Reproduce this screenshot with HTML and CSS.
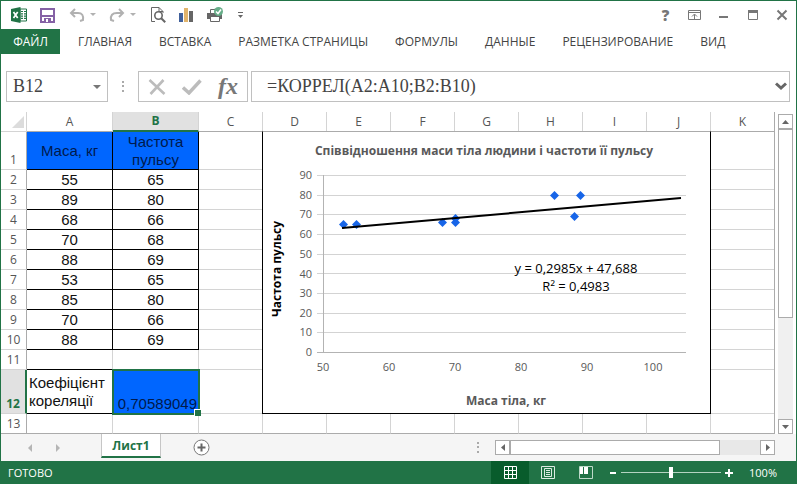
FILE: index.html
```html
<!DOCTYPE html>
<html lang="uk">
<head>
<meta charset="utf-8">
<meta name="viewport" content="width=device-width, initial-scale=1">
<title>Excel</title>
<link rel="stylesheet" href="styles.css">
</head>
<body>
<div class="app">
  <header class="titlebar">
    <div class="quick">
      <svg class="logo" width="16" height="16" viewBox="0 0 16 16" aria-hidden="true"><path d="M9 2h6.500v12H9z" fill="#fff" stroke="#217346"/><path d="M10 4.500h2m1 0h2m-5 2.300h2m1 0h2m-5 2.300h2m1 0h2m-5 2.300h2m1 0h2" stroke="#217346" stroke-width="1.200"/><path d="M0 2l9.500-2v16L0 14z" fill="#217346"/><path d="M2.500 5l4.200 6M6.700 5l-4.200 6" stroke="#fff" stroke-width="1.700"/></svg>
      <button class="tool save" aria-label="Зберегти"><svg width="15" height="15" viewBox="0 0 15 15"><path d="M1 1h13v13H1z" fill="#fff" stroke="#8561a5" stroke-width="2"/><path d="M2 7h11v2H2zM4 10h7v4H4z" fill="#8561a5"/><path d="M6 11h2v3H6z" fill="#fff"/></svg></button>
      <button class="tool history" aria-label="Скасувати"><svg width="29" height="16" viewBox="0 0 29 16"><path d="M7 2L3 6l4 4M3.500 6H10q6 0 5 7l-3 1" fill="none" stroke="#b1b1b1" stroke-width="2"/><path d="M22 6h6l-3 3z" fill="#b1b1b1"/></svg></button>
      <button class="tool history" aria-label="Повторити"><svg width="29" height="16" viewBox="0 0 29 16"><path d="M10 2l4 4-4 4M13.500 6H8Q1 6 2 13l3 1" fill="none" stroke="#b1b1b1" stroke-width="2"/><path d="M21 6h6l-3 3z" fill="#b1b1b1"/></svg></button>
      <button class="tool" aria-label="Перегляд"><svg width="16" height="16" viewBox="0 0 16 16"><path d="M5 14.500H1.500V.5H9l4 4V6M9 .5v4h4" fill="none" stroke="#666"/><circle cx="8.500" cy="8.500" r="3.700" fill="#fff" stroke="#666" stroke-width="1.600"/><path d="M11.200 11.200l4 4" stroke="#666" stroke-width="2"/></svg></button>
      <button class="tool" aria-label="Діаграма"><svg width="16" height="16" viewBox="0 0 16 16"><path d="M1 6h4v9H1z" fill="#40609b"/><path d="M6 1h4v14H6z" fill="#e2b46b"/><path d="M11 4h4v11h-4z" fill="#666"/></svg></button>
      <button class="tool print" aria-label="Друк"><svg width="18" height="16" viewBox="0 0 18 16"><path d="M4.500 6V2.500H9" fill="none" stroke="#666"/><path d="M1 6h15v6h-2v-2H4v2H1z" fill="#666"/><path d="M4.500 10v4.500h9V10" fill="#fff" stroke="#666"/><circle cx="12.500" cy="4.500" r="4.500" fill="#66ad88"/><path d="M10 4.500l2 2 3-4" fill="none" stroke="#fff" stroke-width="1.500"/></svg></button>
      <button class="tool more" aria-label="Налаштувати"><svg width="7" height="8" viewBox="0 0 7 8"><path d="M1 1.500h5" stroke="#666"/><path d="M1 4h5L3.500 7z" fill="#666"/></svg></button>
    </div>
    <div class="window">
      <button class="wbtn help" aria-label="Довідка">?</button>
      <button class="wbtn" aria-label="Стрічка"><svg width="14" height="12" viewBox="0 0 14 12"><path d="M.5 1.500h12v9H.5zM.5 3.500h12M6.500 10V5.500M4 7.500L6.500 5 9 7.500" fill="none" stroke="#777"/></svg></button>
      <button class="wbtn" aria-label="Згорнути"><svg width="12" height="12" viewBox="0 0 12 12"><path d="M1 7h9v2H1z" fill="#777"/></svg></button>
      <button class="wbtn" aria-label="Розгорнути"><svg width="12" height="12" viewBox="0 0 12 12"><path d="M1.500 2v8.500h9V2" fill="none" stroke="#777"/><path d="M1 1h10v3H1z" fill="#777"/></svg></button>
      <button class="wbtn" aria-label="Закрити"><svg width="12" height="12" viewBox="0 0 12 12"><path d="M1.500 1.500l9 9m0-9l-9 9" stroke="#777" stroke-width="2"/></svg></button>
    </div>
  </header>
  <nav class="menu">
    <button class="file">ФАЙЛ</button>
    <button>ГЛАВНАЯ</button>
    <button>ВСТАВКА</button>
    <button>РАЗМЕТКА СТРАНИЦЫ</button>
    <button>ФОРМУЛЫ</button>
    <button>ДАННЫЕ</button>
    <button>РЕЦЕНЗИРОВАНИЕ</button>
    <button>ВИД</button>
  </nav>
  <div class="formula-row">
    <div class="box namebox">
      <input type="text" value="B12" aria-label="Ім'я клітинки">
      <button aria-label="Список імен"><svg width="8" height="4" viewBox="0 0 8 4"><path d="M0 0h8L4 4z" fill="#777"/></svg></button>
    </div>
    <svg class="grip" width="2" height="11" viewBox="0 0 2 11" aria-hidden="true"><path d="M0 0h2v2H0zM0 4h2v2H0zM0 9h2v2H0z" fill="#aaa"/></svg>
    <div class="box actions">
      <button aria-label="Скасувати введення"><svg width="18" height="16" viewBox="0 0 18 16"><path d="M1.500 1l15 14M15.500 1L2.500 15" stroke="#bcbcbc" stroke-width="2.600"/></svg></button>
      <button aria-label="Ввести"><svg width="20" height="16" viewBox="0 0 20 16"><path d="M1 8.500l6 5.500L18.500 1.500" fill="none" stroke="#bcbcbc" stroke-width="3.400"/></svg></button>
      <button class="fx" aria-label="Вставити функцію">fx</button>
    </div>
    <div class="box formula">
      <input type="text" value="=КОРРЕЛ(A2:A10;B2:B10)" aria-label="Формула">
      <button aria-label="Розгорнути рядок формул"><svg width="12" height="9" viewBox="0 0 12 9"><path d="M1 1.500l5 4.500 5-4.500" fill="none" stroke="#666" stroke-width="3"/></svg></button>
    </div>
  </div>
  <main class="work">
    <div class="sheet">
      <table>
        <colgroup><col class="c-num"><col class="c-wide"><col class="c-wide"><col class="c-std"><col class="c-std"><col class="c-std"><col class="c-std"><col class="c-std"><col class="c-std"><col class="c-std"><col class="c-std"><col></colgroup>
        <thead><tr><th class="corner"><svg width="12" height="12" viewBox="0 0 12 12" aria-hidden="true"><path d="M12 0v12H0z" fill="#dcdcdc"/></svg></th><th>A</th><th class="on">B</th><th>C</th><th>D</th><th>E</th><th>F</th><th>G</th><th>H</th><th>I</th><th>J</th><th>K</th></tr></thead>
        <tbody>
          <tr class="first"><th>1</th><td class="d blue">Маса, кг</td><td class="d blue">Частота пульсу</td><td></td><td colspan="7"></td><td></td></tr>
          <tr><th>2</th><td class="d">55</td><td class="d">65</td><td></td><td colspan="7"></td><td></td></tr>
          <tr><th>3</th><td class="d">89</td><td class="d">80</td><td></td><td colspan="7"></td><td></td></tr>
          <tr><th>4</th><td class="d">68</td><td class="d">66</td><td></td><td colspan="7"></td><td></td></tr>
          <tr><th>5</th><td class="d">70</td><td class="d">68</td><td></td><td colspan="7"></td><td></td></tr>
          <tr><th>6</th><td class="d">88</td><td class="d">69</td><td></td><td colspan="7"></td><td></td></tr>
          <tr><th>7</th><td class="d">53</td><td class="d">65</td><td></td><td colspan="7"></td><td></td></tr>
          <tr><th>8</th><td class="d">85</td><td class="d">80</td><td></td><td colspan="7"></td><td></td></tr>
          <tr><th>9</th><td class="d">70</td><td class="d">66</td><td></td><td colspan="7"></td><td></td></tr>
          <tr><th>10</th><td class="d">88</td><td class="d">69</td><td></td><td colspan="7"></td><td></td></tr>
          <tr><th>11</th><td class="under"></td><td></td><td></td><td colspan="7"></td><td></td></tr>
          <tr class="result"><th class="on">12</th><td class="d label">Коефіцієнт кореляції</td><td class="d active">0,70589049</td><td></td><td colspan="7"></td><td></td></tr>
          <tr class="last"><th>13</th><td></td><td></td><td></td><td></td><td></td><td></td><td></td><td></td><td></td><td></td><td></td></tr>
        </tbody>
      </table>
      <figure class="chart">
        <svg viewBox="263 132 447 281" role="img" aria-label="Діаграма">
          <path d="M317 175.500H686M317 195.500H686M317 214.500H686M317 234.500H686M317 254.500H686M317 273.500H686M317 293.500H686M317 313.500H686M317 332.500H686" stroke="#d3d3d3"/>
          <path d="M323.500 175V352.500M317 352.500H686" fill="none" stroke="#b3b3b3"/>
          <g fill="#1765e8"><path d="M343.500 220l4.500 4.500-4.500 4.500-4.500-4.500z"/><path d="M356.500 220l4.500 4.500-4.500 4.500-4.500-4.500z"/><path d="M442.500 218l4.500 4.500-4.500 4.500-4.500-4.500z"/><path d="M455.500 214l4.500 4.500-4.500 4.500-4.500-4.500z"/><path d="M455.500 218l4.500 4.500-4.500 4.500-4.500-4.500z"/><path d="M554.500 191l4.500 4.500-4.500 4.500-4.500-4.500z"/><path d="M580.500 191l4.500 4.500-4.500 4.500-4.500-4.500z"/><path d="M574.500 212l4.500 4.500-4.500 4.500-4.500-4.500z"/></g>
          <path d="M342 228L681 198" stroke="#000" stroke-width="2"/>
          <text class="t-title" x="484" y="155">Співвідношення маси тіла людини і частоти її пульсу</text>
          <g class="t-y"><text x="312" y="179">90</text><text x="312" y="199">80</text><text x="312" y="218">70</text><text x="312" y="238">60</text><text x="312" y="258">50</text><text x="312" y="278">40</text><text x="312" y="297">30</text><text x="312" y="317">20</text><text x="312" y="336">10</text><text x="312" y="356">0</text></g>
          <g class="t-x"><text x="323" y="371">50</text><text x="389" y="371">60</text><text x="455" y="371">70</text><text x="521" y="371">80</text><text x="587" y="371">90</text><text x="653" y="371">100</text></g>
          <g class="t-eq"><text x="576" y="273">y = 0,2985x + 47,688</text><text x="576" y="291">R² = 0,4983</text></g>
          <text class="t-title" x="506" y="405">Маса тіла, кг</text>
          <text class="t-side" transform="translate(281 269) rotate(-90)">Частота пульсу</text>
        </svg>
      </figure>
    </div>
    <div class="vscroll">
      <button aria-label="Вгору"><svg width="7" height="4" viewBox="0 0 7 4"><path d="M0 4h7L3.500 0z" fill="#666"/></svg></button>
      <div class="vtrack"><div class="vthumb"></div></div>
      <button aria-label="Вниз"><svg width="7" height="4" viewBox="0 0 7 4"><path d="M0 0h7L3.500 4z" fill="#666"/></svg></button>
    </div>
  </main>
  <div class="sheets">
    <button class="arrow" aria-label="Назад"><svg width="4" height="8" viewBox="0 0 4 8"><path d="M4 0v8L0 4z" fill="#b5b5b5"/></svg></button>
    <button class="arrow" aria-label="Вперед"><svg width="4" height="8" viewBox="0 0 4 8"><path d="M0 0v8l4-4z" fill="#b5b5b5"/></svg></button>
    <button class="tab">Лист1</button>
    <button class="add" aria-label="Новий аркуш"><svg width="17" height="17" viewBox="0 0 17 17"><circle cx="8.500" cy="8.500" r="7.500" fill="#fff" stroke="#777"/><path d="M4.500 8.500h8M8.500 4.500v8" stroke="#666" stroke-width="2"/></svg></button>
    <svg class="grip" width="2" height="11" viewBox="0 0 2 11" aria-hidden="true"><path d="M0 0h2v2H0zM0 4h2v2H0zM0 9h2v2H0z" fill="#aaa"/></svg>
    <div class="hscroll">
      <button aria-label="Вліво"><svg width="4" height="7" viewBox="0 0 4 7"><path d="M4 0v7L0 3.500z" fill="#666"/></svg></button>
      <div class="htrack"><div class="hthumb"></div></div>
      <button aria-label="Вправо"><svg width="4" height="7" viewBox="0 0 4 7"><path d="M0 0v7l4-3.500z" fill="#666"/></svg></button>
    </div>
  </div>
  <footer class="status">
    <span class="ready">ГОТОВО</span>
    <button class="view current" aria-label="Звичайний"><svg width="13" height="13" viewBox="0 0 13 13"><path d="M.5.5h12v12H.5zM.5 4.500h12M.5 8.500h12M4.500.5v12M8.500.5v12" fill="none" stroke="#fff"/></svg></button>
    <button class="view" aria-label="Розмітка"><svg width="14" height="13" viewBox="0 0 14 13"><path d="M.5.5h13v12H.5zM3.500 2.500h7v8h-7zM5 4.500h4M5 6.500h4M5 8.500h4" fill="none" stroke="#dcebe2"/></svg></button>
    <button class="view" aria-label="Сторінки"><svg width="14" height="13" viewBox="0 0 14 13"><path d="M.5.5h13v12H.5z" fill="none" stroke="#bcd8c8"/><path d="M1 1h3v7H1zM5 1h4v7H5z" fill="#fff"/></svg></button>
    <div class="zoom">
      <button aria-label="Зменшити"><svg width="8" height="8" viewBox="0 0 8 8"><path d="M1 3h6v2H1z" fill="#fff"/></svg></button>
      <input type="range" min="0" max="200" value="100" aria-label="Масштаб">
      <button aria-label="Збільшити"><svg width="8" height="8" viewBox="0 0 8 8"><path d="M0 3h8v2H0zM3 0h2v8H3z" fill="#fff"/></svg></button>
    </div>
    <span class="percent">100%</span>
  </footer>
</div>
</body>
</html>
```
FILE: styles.css
```css
* { box-sizing: border-box; }

body {
  margin: 0;
  background: #fff;
  font-family: "Open Sans", "Noto Sans", sans-serif;
  font-size: 12px;
  color: #444;
}

button {
  display: flex;
  align-items: center;
  justify-content: center;
  padding: 0;
  border: 0;
  background: none;
  font: inherit;
  color: inherit;
}

input { font: inherit; color: inherit; }
svg { display: block; flex: none; }

.app {
  display: flex;
  flex-direction: column;
  min-height: 100vh;
  border: 1px solid #217346;
  border-bottom: 0;
}

/* Title bar */
.titlebar {
  display: flex;
  justify-content: space-between;
  align-items: center;
  height: 28px;
}
.quick {
  display: flex;
  align-items: center;
  gap: 12px;
  padding-left: 10px;
}
.tool { width: 16px; height: 16px; }
.save { width: 17px; }
.history { width: 29px; }
.print { width: 18px; }
.more { width: 8px; }
.window { display: flex; }
.wbtn { width: 29px; height: 28px; }
.help { font-size: 15px; font-weight: 800; color: #777; }

/* Ribbon tabs */
.menu {
  display: flex;
  gap: 27px;
  height: 25px;
}
.file {
  width: 59px;
  margin-right: -9px;
  background: #217346;
  color: #fff;
}

/* Formula bar */
.formula-row {
  display: flex;
  align-items: center;
  padding: 17px 6px 10px 5px;
}
.box {
  display: flex;
  height: 31px;
  border: 1px solid #c0c0c0;
  font-family: "Liberation Serif", serif;
  font-size: 18px;
}
.box input {
  flex: 1;
  min-width: 0;
  padding: 0;
  border: 0;
  outline: 0;
  background: none;
}
.namebox { width: 102px; padding-left: 6px; }
.namebox button { width: 20px; }
.formula-row .grip { margin: 0 14px; }
.actions {
  width: 110px;
  justify-content: space-between;
  padding: 0 9px;
  margin-right: 3px;
}
.fx {
  font-size: 24px;
  font-style: italic;
  font-weight: 700;
  color: #777;
}
.formula { flex: 1; padding-left: 15px; }
.formula button { width: 16px; }

/* Worksheet */
.work { display: flex; gap: 3px; }
.sheet {
  position: relative;
  flex: 1;
  border-right: 1px solid #ababab;
}
table {
  width: 100%;
  table-layout: fixed;
  border-collapse: separate;
  border-spacing: 0;
}
.c-num { width: 26px; }
.c-wide { width: 86px; }
.c-std { width: 64px; }
th, td {
  height: 20px;
  padding: 0;
  border: solid #d4d4d4;
  border-width: 0 1px 1px 0;
  line-height: 18px;
}
td:last-child, thead th:last-child { border-right: 0; }
th { font-size: 12px; font-weight: 400; color: #555; }
thead th { border-bottom-color: #ababab; }
thead .corner { border-bottom-color: #d4d4d4; }
.corner svg { margin-left: 11px; }
thead .on {
  border-bottom: 2px solid #217346;
  background: #e1e1e1;
}
th.on { color: #217346; font-weight: 700; }
tbody th { border-right-color: #ababab; vertical-align: bottom; }
tbody .on { border-right: 2px solid #217346; background: #e1e1e1; }
.d {
  border-color: #000;
  font-family: "Liberation Sans", sans-serif;
  font-size: 15px;
  color: #111;
  text-align: center;
}
.first > * { height: 38px; }
.blue { background: #06f; color: #001a4d; }
.under { border-bottom-color: #000; }
.result > * { height: 44px; }
.label { padding-left: 2px; text-align: left; }
.active {
  position: relative;
  padding-right: 1px;
  border: 1px solid #fff;
  outline: 2px solid #217346;
  outline-offset: -1px;
  background: #06f;
  color: #001a4d;
  text-align: right;
  vertical-align: bottom;
}
.active::after {
  content: "";
  position: absolute;
  right: -3px;
  bottom: -3px;
  width: 6px;
  height: 6px;
  border: solid #fff;
  border-width: 1px 0 0 1px;
  background: #217346;
}
.last > * { border-bottom-color: #ababab; }

/* Floating chart */
.chart {
  position: absolute;
  left: 261px;
  top: 19px;
  width: 449px;
  margin: 0;
  border: 1px solid #000;
  border-top-color: #ababab;
  background: #fff;
}
.chart text { text-anchor: middle; }
.t-title { font-size: 12px; font-weight: 700; fill: #595959; }
.chart .t-y text { text-anchor: end; }
.t-y, .t-x { font-size: 11px; fill: #595959; }
.t-eq { font-size: 13px; fill: #000; }
.t-side { font-size: 12px; font-weight: 700; fill: #000; }

/* Scroll bars */
.vscroll {
  display: flex;
  flex-direction: column;
  width: 15px;
  margin: 2px 3px 0 0;
}
.vscroll button, .hscroll button {
  width: 15px;
  height: 15px;
  border: 1px solid #ababab;
  background: #fff;
}
.vtrack { flex: 1; background: #f0f0f0; }
.vthumb { height: 65%; border: 1px solid #ababab; background: #fff; }
.hscroll { display: flex; width: 280px; }
.htrack { flex: 1; background: #e8e8e8; }
.hthumb { width: 84%; height: 15px; border: 1px solid #ababab; background: #fff; }

/* Sheet tabs */
.sheets {
  display: flex;
  align-items: center;
  height: 27px;
  padding: 0 21px 0 15px;
  background: #f5f5f5;
}
.arrow { width: 28px; height: 20px; }
.tab {
  width: 60px;
  align-self: flex-start;
  height: 24px;
  margin-left: 29px;
  border: solid #c6c6c6;
  border-width: 0 1px;
  border-bottom: 2px solid #217346;
  background: #fff;
  color: #217346;
  font-weight: 700;
}
.add { margin-left: 32px; }
.sheets .grip { margin: 0 16px 0 auto; }

/* Status bar */
.status {
  display: flex;
  align-items: center;
  height: 23px;
  padding: 0 20px 0 8px;
  margin: 0 -1px;
  background: #217346;
  color: #fff;
  font-size: 11px;
}
.ready { margin-right: auto; }
.view { width: 38px; height: 23px; }
.current { background: #085c2c; }
.zoom { display: flex; align-items: center; gap: 4px; margin: 0 16px 0 4px; }
.zoom input {
  width: 100px;
  height: 12px;
  margin: 0;
  appearance: none;
  background: linear-gradient(#b5d3c1, #b5d3c1) center / 100% 1px no-repeat;
}
.zoom input::-webkit-slider-thumb {
  appearance: none;
  width: 4px;
  height: 11px;
  background: #fff;
}
```
